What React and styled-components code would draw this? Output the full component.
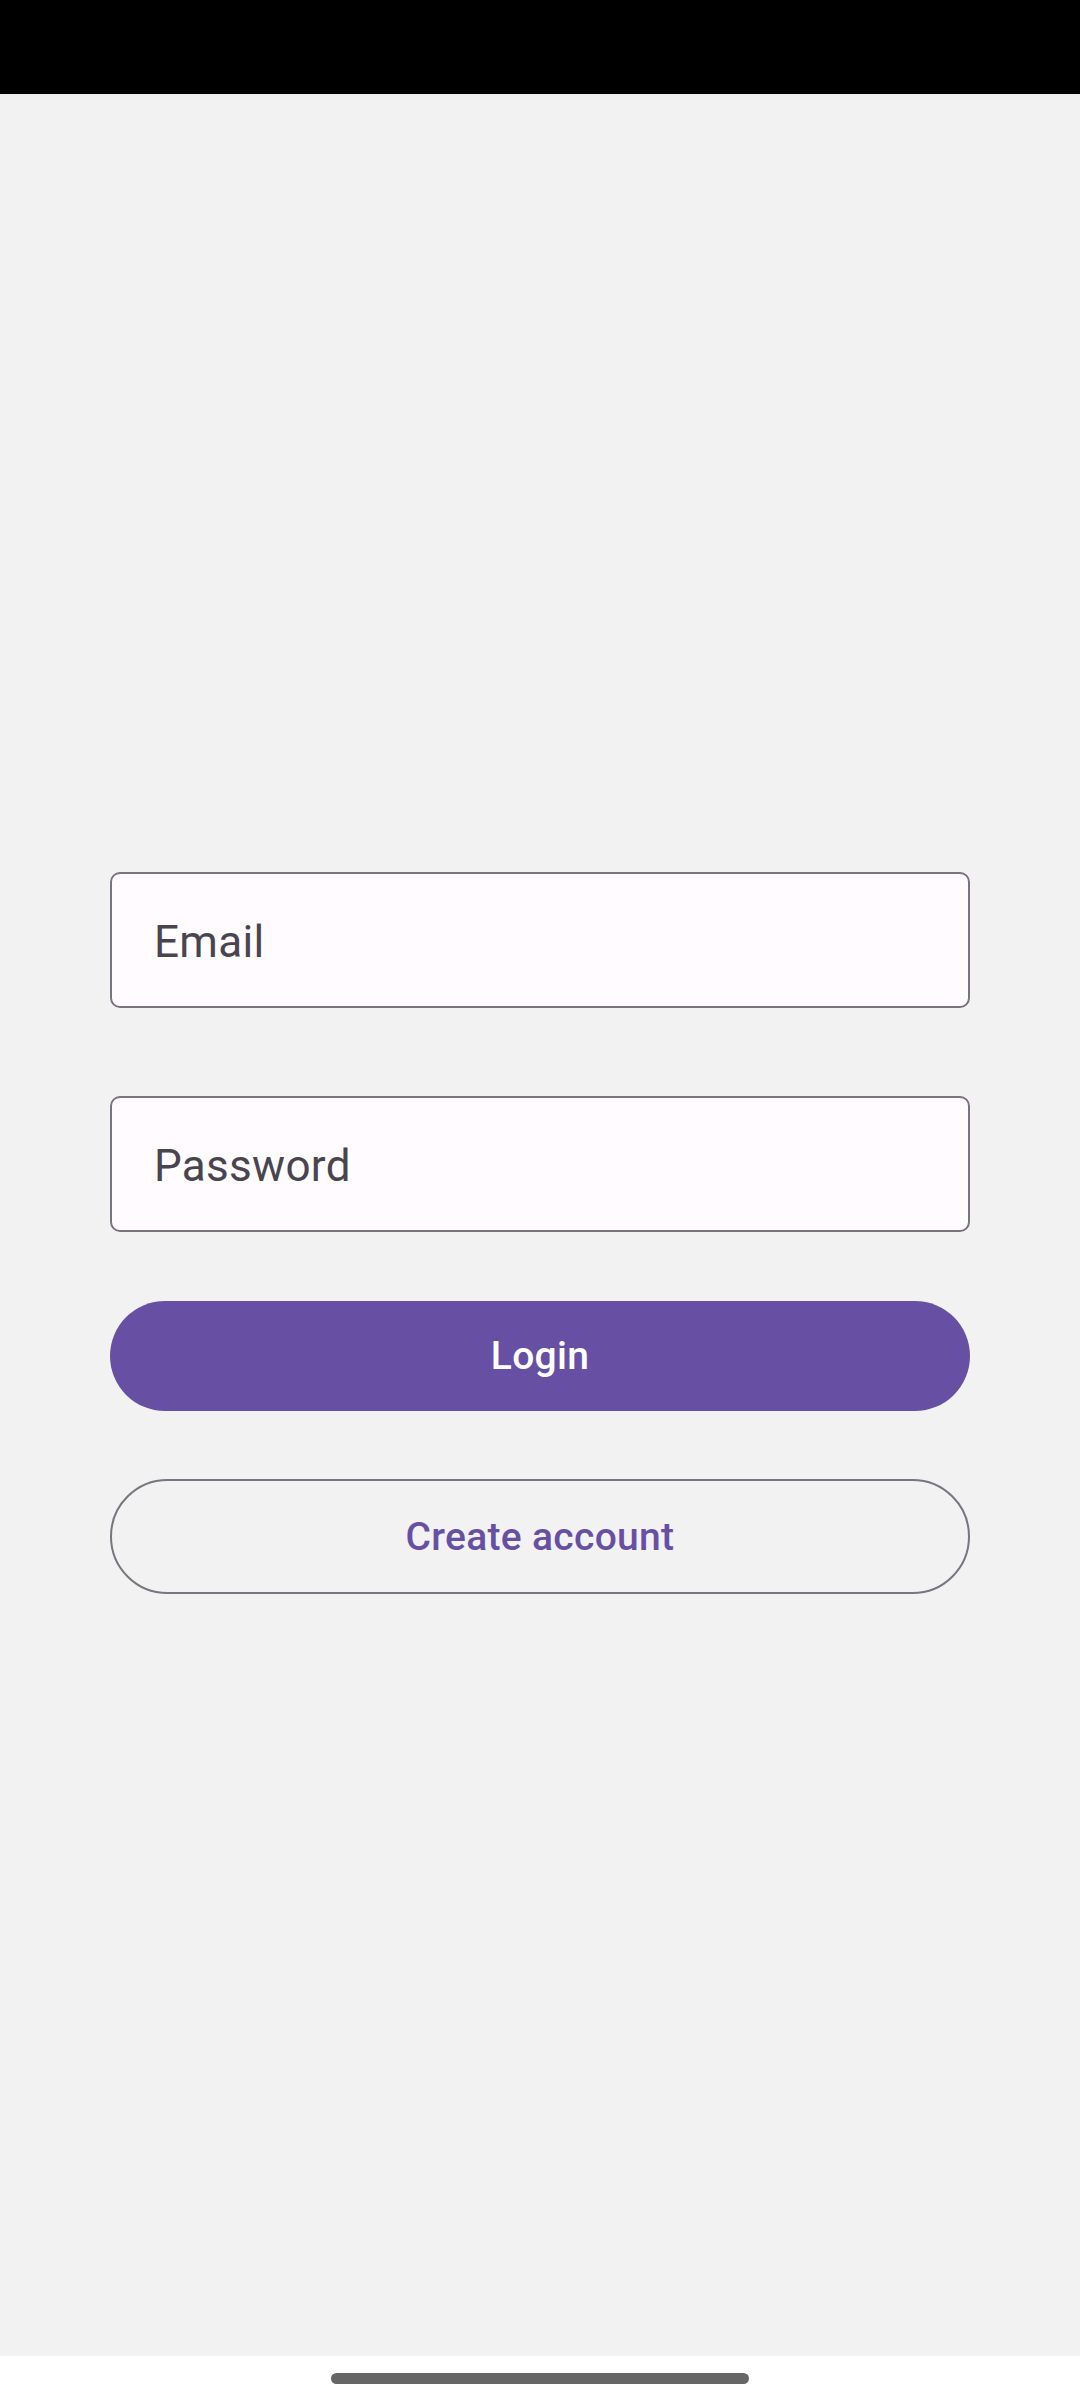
import React from 'react';
import styled, { createGlobalStyle } from 'styled-components';

const GlobalStyle = createGlobalStyle`
  html, body {
    margin: 0;
    padding: 0;
    background: #ffffff;
    font-family: Roboto, "Noto Sans", sans-serif;
  }
  * {
    box-sizing: border-box;
  }
`;

const Screen = styled.div`
  width: 1080px;
  height: 2400px;
  display: flex;
  flex-direction: column;
`;

const StatusBar = styled.div`
  height: 94px;
  background: #000000;
  flex-shrink: 0;
`;

const Content = styled.main`
  flex: 1;
  background: #f2f2f2;
  padding: 778px 110px 0;
`;

const Form = styled.form`
  display: flex;
  flex-direction: column;
  width: 860px;
`;

const Field = styled.input`
  height: 136px;
  width: 100%;
  margin-bottom: ${({ $gap }) => $gap}px;
  padding: 4px 42px 0;
  background: #fffbfe;
  border: 2px solid #79747e;
  border-radius: 10px;
  font-family: Roboto, sans-serif;
  font-size: 44px;
  letter-spacing: 0.3px;
  color: #1c1b1f;
  outline: none;

  &::placeholder {
    color: #49454f;
  }
`;

const Button = styled.button`
  width: 100%;
  height: ${({ $outlined }) => ($outlined ? 115 : 110)}px;
  margin-bottom: ${({ $gap }) => $gap || 0}px;
  border-radius: 60px;
  font-family: Roboto, sans-serif;
  font-weight: 500;
  font-size: 39px;
  letter-spacing: 0.3px;
  cursor: pointer;
  background: ${({ $outlined }) => ($outlined ? 'transparent' : '#6750a4')};
  color: ${({ $outlined }) => ($outlined ? '#6750a4' : '#ffffff')};
  border: ${({ $outlined }) => ($outlined ? '2px solid #79747e' : 'none')};
`;

const NavBar = styled.div`
  height: 44px;
  background: #ffffff;
  flex-shrink: 0;
  display: flex;
  justify-content: center;
  padding-top: 17px;
`;

const HomeHandle = styled.div`
  width: 418px;
  height: 11px;
  border-radius: 6px;
  background: #666666;
`;

const App = () => {
  return (
    <>
      <GlobalStyle />
      <Screen>
        <StatusBar />
        <Content>
          <Form onSubmit={(e) => e.preventDefault()}>
            <Field type="email" placeholder="Email" $gap={88} />
            <Field type="password" placeholder="Password" $gap={69} />
            <Button type="submit" $gap={68}>Login</Button>
            <Button type="button" $outlined>Create account</Button>
          </Form>
        </Content>
        <NavBar>
          <HomeHandle />
        </NavBar>
      </Screen>
    </>
  );
};

export default App;
